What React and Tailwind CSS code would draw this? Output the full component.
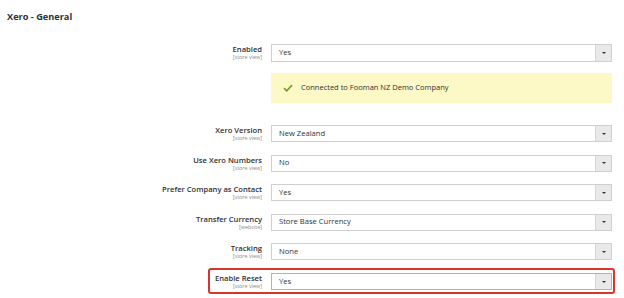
const FONT = { fontFamily: '"Open Sans", "Liberation Sans", sans-serif' };

const rows = [
  { label: "Xero Version", scope: "[store view]", value: "New Zealand" },
  { label: "Use Xero Numbers", scope: "[store view]", value: "No" },
  { label: "Prefer Company as Contact", scope: "[store view]", value: "Yes" },
  { label: "Transfer Currency", scope: "[website]", value: "Store Base Currency" },
  { label: "Tracking", scope: "[store view]", value: "None" },
];

function Select({ value, focused = false, tall = false }) {
  return (
    <div
      className={`flex w-[341px] shrink-0 border bg-white ${
        tall ? "h-[18px]" : "h-[17px]"
      } ${focused ? "border-[#8fbce6]" : "border-[#cfcfcf]"}`}
    >
      <div className="flex flex-1 items-center pl-[7px] text-[7.6px] text-[#303030]">
        {value}
      </div>
      <div className="flex w-[16px] items-center justify-center border-l border-[#d6d6d6] bg-[#e9e9e9]">
        <div className="h-0 w-0 border-x-[2px] border-t-[2.5px] border-x-transparent border-t-[#333]" />
      </div>
    </div>
  );
}

function Label({ label, scope }) {
  return (
    <div className="flex flex-col items-end pr-[1px] pt-[2px] leading-none">
      <span className="text-[7.6px] font-semibold text-[#303030]">{label}</span>
      <span className="mt-[1.5px] text-[5.4px] text-[#8a8a8a]">{scope}</span>
    </div>
  );
}

export default function App() {
  return (
    <div className="h-[298px] w-[624px] overflow-hidden bg-white" style={FONT}>
      <h2 className="pl-[7px] pt-[11px] text-[9.2px] font-bold leading-[12px] text-[#303030]">
        Xero - General
      </h2>

      <div className="mt-[21px] flex">
        <div className="w-[263px] shrink-0">
          <Label label="Enabled" scope="[store view]" />
        </div>
        <div className="ml-[8px]">
          <Select value="Yes" tall />
        </div>
      </div>

      <div className="ml-[271px] mt-[11px] flex h-[30px] w-[341px] items-center bg-[#fcf9c6] pl-[12px]">
        <svg width="10" height="8" viewBox="0 0 10 8" className="shrink-0">
          <path d="M1 4.2 L3.7 6.8 L9 1.2" fill="none" stroke="#79a22e" strokeWidth="1.8" />
        </svg>
        <span className="ml-[8px] text-[7.5px] text-[#303030]">
          Connected to Fooman NZ Demo Company
        </span>
      </div>

      <div className="mt-[22px] flex flex-col gap-[12.5px]">
        {rows.map((row) => (
          <div key={row.label} className="flex">
            <div className="w-[263px] shrink-0">
              <Label label={row.label} scope={row.scope} />
            </div>
            <div className="ml-[8px]">
              <Select value={row.value} />
            </div>
          </div>
        ))}
      </div>

      <div className="ml-[208px] mt-[8px] flex w-[407px] rounded-[3px] border-2 border-[#d8352b] pb-[2px] pt-[3px]">
        <div className="w-[53px] shrink-0">
          <Label label="Enable Reset" scope="[store view]" />
        </div>
        <div className="ml-[8px]">
          <Select value="Yes" focused />
        </div>
      </div>
    </div>
  );
}
